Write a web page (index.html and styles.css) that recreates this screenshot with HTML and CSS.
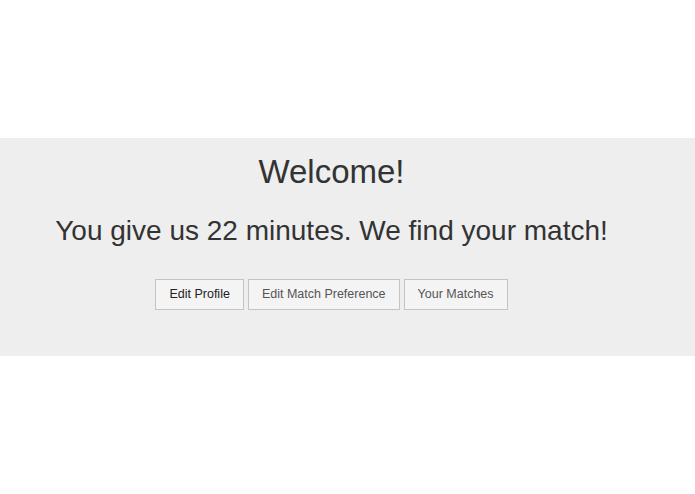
FILE: index.html
```html
<!DOCTYPE html>
<html lang="en">
<head>
    <meta charset="UTF-8">
    <meta name="viewport" content="width=device-width, initial-scale=1.0">
    <title>Welcome</title>
    <link rel="stylesheet" href="styles.css">
</head>
<body>
    <div class="jumbotron">
        <div class="container">
            <h1>Welcome!</h1>
            <p class="lead">You give us 22 minutes. We find your match!</p>
            <div class="actions">
                <button class="btn active">Edit Profile</button>
                <button class="btn">Edit Match Preference</button>
                <button class="btn">Your Matches</button>
            </div>
        </div>
    </div>
</body>
</html>
```

FILE: styles.css
```css
* {
    margin: 0;
    padding: 0;
    box-sizing: border-box;
}
body {
    font-family: "Liberation Sans", Arial, sans-serif;
    color: #333;
    background: #fff;
    padding-top: 138px;
}
.jumbotron {
    background: #eee;
    padding: 16px 0 46px;
}
.container {
    width: 663px;
    text-align: center;
}
h1 {
    font-size: 33px;
    line-height: 36px;
    font-weight: normal;
}
.lead {
    font-size: 28px;
    line-height: 32px;
    margin-top: 25px;
}
.actions {
    display: flex;
    justify-content: center;
    gap: 4px;
    margin-top: 32px;
}
.btn {
    font-family: "Liberation Sans", Arial, sans-serif;
    font-size: 12.5px;
    line-height: 17px;
    padding: 6px 13px;
    color: #555;
    background: #f4f4f4;
    border: 1px solid #c4c4c4;
    border-radius: 0;
    cursor: pointer;
}
.btn.active {
    color: #222;
}
```
